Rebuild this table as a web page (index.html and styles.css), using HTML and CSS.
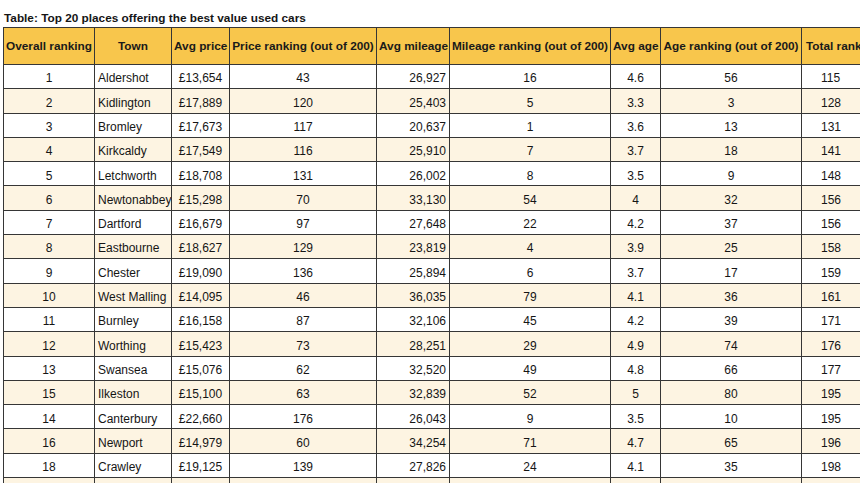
FILE: index.html
```html
<!DOCTYPE html>
<html>
<head>
<meta charset="utf-8">
<link rel="stylesheet" href="styles.css">
</head>
<body>
<div class="page">
  <div class="title">Table: Top 20 places offering the best value used cars</div>
  <table class="cars">
    <colgroup>
      <col class="w-rank"><col class="w-town"><col class="w-price"><col class="w-prank">
      <col class="w-mileage"><col class="w-mrank"><col class="w-age"><col class="w-arank"><col class="w-total">
    </colgroup>
    <thead>
      <tr>
        <th>Overall ranking</th><th>Town</th><th>Avg price</th><th>Price ranking (out of 200)</th>
        <th>Avg mileage</th><th>Mileage ranking (out of 200)</th><th>Avg age</th><th>Age ranking (out of 200)</th><th class="c-total">Total ranking</th>
      </tr>
    </thead>
    <tbody>
      <tr><td>1</td><td class="c-town">Aldershot</td><td>£13,654</td><td>43</td><td class="c-mil">26,927</td><td>16</td><td>4.6</td><td>56</td><td class="c-total">115</td></tr>
      <tr><td>2</td><td class="c-town">Kidlington</td><td>£17,889</td><td>120</td><td class="c-mil">25,403</td><td>5</td><td>3.3</td><td>3</td><td class="c-total">128</td></tr>
      <tr><td>3</td><td class="c-town">Bromley</td><td>£17,673</td><td>117</td><td class="c-mil">20,637</td><td>1</td><td>3.6</td><td>13</td><td class="c-total">131</td></tr>
      <tr><td>4</td><td class="c-town">Kirkcaldy</td><td>£17,549</td><td>116</td><td class="c-mil">25,910</td><td>7</td><td>3.7</td><td>18</td><td class="c-total">141</td></tr>
      <tr><td>5</td><td class="c-town">Letchworth</td><td>£18,708</td><td>131</td><td class="c-mil">26,002</td><td>8</td><td>3.5</td><td>9</td><td class="c-total">148</td></tr>
      <tr><td>6</td><td class="c-town">Newtonabbey</td><td>£15,298</td><td>70</td><td class="c-mil">33,130</td><td>54</td><td>4</td><td>32</td><td class="c-total">156</td></tr>
      <tr><td>7</td><td class="c-town">Dartford</td><td>£16,679</td><td>97</td><td class="c-mil">27,648</td><td>22</td><td>4.2</td><td>37</td><td class="c-total">156</td></tr>
      <tr><td>8</td><td class="c-town">Eastbourne</td><td>£18,627</td><td>129</td><td class="c-mil">23,819</td><td>4</td><td>3.9</td><td>25</td><td class="c-total">158</td></tr>
      <tr><td>9</td><td class="c-town">Chester</td><td>£19,090</td><td>136</td><td class="c-mil">25,894</td><td>6</td><td>3.7</td><td>17</td><td class="c-total">159</td></tr>
      <tr><td>10</td><td class="c-town">West Malling</td><td>£14,095</td><td>46</td><td class="c-mil">36,035</td><td>79</td><td>4.1</td><td>36</td><td class="c-total">161</td></tr>
      <tr><td>11</td><td class="c-town">Burnley</td><td>£16,158</td><td>87</td><td class="c-mil">32,106</td><td>45</td><td>4.2</td><td>39</td><td class="c-total">171</td></tr>
      <tr><td>12</td><td class="c-town">Worthing</td><td>£15,423</td><td>73</td><td class="c-mil">28,251</td><td>29</td><td>4.9</td><td>74</td><td class="c-total">176</td></tr>
      <tr><td>13</td><td class="c-town">Swansea</td><td>£15,076</td><td>62</td><td class="c-mil">32,520</td><td>49</td><td>4.8</td><td>66</td><td class="c-total">177</td></tr>
      <tr><td>15</td><td class="c-town">Ilkeston</td><td>£15,100</td><td>63</td><td class="c-mil">32,839</td><td>52</td><td>5</td><td>80</td><td class="c-total">195</td></tr>
      <tr><td>14</td><td class="c-town">Canterbury</td><td>£22,660</td><td>176</td><td class="c-mil">26,043</td><td>9</td><td>3.5</td><td>10</td><td class="c-total">195</td></tr>
      <tr><td>16</td><td class="c-town">Newport</td><td>£14,979</td><td>60</td><td class="c-mil">34,254</td><td>71</td><td>4.7</td><td>65</td><td class="c-total">196</td></tr>
      <tr><td>18</td><td class="c-town">Crawley</td><td>£19,125</td><td>139</td><td class="c-mil">27,826</td><td>24</td><td>4.1</td><td>35</td><td class="c-total">198</td></tr>
      <tr><td>&nbsp;</td><td class="c-town"></td><td></td><td></td><td class="c-mil"></td><td></td><td></td><td></td><td class="c-total"></td></tr>
    </tbody>
  </table>
</div>
</body>
</html>
```

FILE: styles.css
```css
html, body {
  margin: 0;
  padding: 0;
  background: #ffffff;
  overflow: hidden;
}

.page {
  width: 860px;
  height: 483px;
  overflow: hidden;
  padding-left: 3px;
  box-sizing: border-box;
  font-family: "Liberation Sans", Arial, sans-serif;
  color: #151515;
}

.title {
  padding-top: 11px;
  padding-left: 1px;
  font-size: 11.8px;
  line-height: 14px;
  font-weight: bold;
  height: 16px;
  white-space: nowrap;
}

.cars {
  border-collapse: collapse;
  table-layout: fixed;
  width: 888px;
  font-size: 12px;
}

.w-rank { width: 91px; }
.w-town { width: 77px; }
.w-price { width: 58px; }
.w-prank { width: 147px; }
.w-mileage { width: 73px; }
.w-mrank { width: 161px; }
.w-age { width: 50px; }
.w-arank { width: 141px; }
.w-total { width: 90px; }

.cars th,
.cars td {
  border: 1px solid #363636;
  padding: 0 2px;
  white-space: nowrap;
  overflow: hidden;
  text-align: center;
}

.cars th {
  background: #f8c64c;
  height: 36px;
  font-size: 11.8px;
  font-weight: bold;
  color: #1a1a1a;
}

.cars td {
  height: 19.8px;
  padding-top: 3.5px;
  line-height: 14px;
}

.cars tbody tr:nth-child(even) td {
  background: #fdf4e2;
}

.cars td.c-town {
  text-align: left;
  padding-left: 3px;
}

.cars td.c-mil {
  text-align: right;
  padding-right: 3px;
}

.cars .c-total {
  text-align: left;
  padding-left: 4px;
}

.cars td.c-total {
  padding-left: 19px;
}
```
